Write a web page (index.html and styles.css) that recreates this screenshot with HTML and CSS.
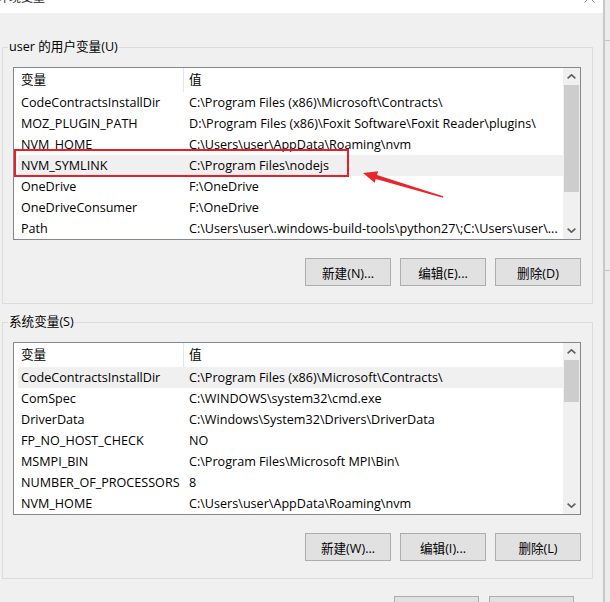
FILE: index.html
```html
<!DOCTYPE html>
<html lang="zh-CN">
<head>
<meta charset="utf-8">
<title>环境变量</title>
<link rel="stylesheet" href="styles.css">
</head>
<body>
<div class="screen">
  <div class="window">
    <div class="titlebar">
      <span class="title">环境变量</span>
      <svg class="close" width="11" height="11" viewBox="0 0 11 11"><path d="M0.5 0.5 L10.5 10.5 M10.5 0.5 L0.5 10.5" stroke="#8a8a8a" stroke-width="1" fill="none"/></svg>
    </div>
    <div class="body">
      <fieldset class="group">
        <legend>user 的用户变量(U)</legend>
        <div class="list">
          <div class="list-main">
            <div class="header"><div class="hcell c1">变量</div><div class="hcell c2">值</div></div>
            <div class="row"><span class="c1">CodeContractsInstallDir</span><span class="c2">C:\Program Files (x86)\Microsoft\Contracts\</span></div>
            <div class="row"><span class="c1">MOZ_PLUGIN_PATH</span><span class="c2">D:\Program Files (x86)\Foxit Software\Foxit Reader\plugins\</span></div>
            <div class="row"><span class="c1">NVM_HOME</span><span class="c2">C:\Users\user\AppData\Roaming\nvm</span></div>
            <div class="row sel"><span class="c1">NVM_SYMLINK</span><span class="c2">C:\Program Files\nodejs</span></div>
            <div class="row"><span class="c1">OneDrive</span><span class="c2">F:\OneDrive</span></div>
            <div class="row"><span class="c1">OneDriveConsumer</span><span class="c2">F:\OneDrive</span></div>
            <div class="row"><span class="c1">Path</span><span class="c2">C:\Users\user\.windows-build-tools\python27\;C:\Users\user\...</span></div>
          </div>
          <div class="scrollbar">
            <div class="sb-btn"><svg width="9" height="5" viewBox="0 0 9 5"><path d="M0.6 4.4 L4.5 0.8 L8.4 4.4" stroke="#606060" stroke-width="1.6" fill="none"/></svg></div>
            <div class="sb-track"><div class="thumb" style="height:107px"></div></div>
            <div class="sb-btn"><svg width="9" height="5" viewBox="0 0 9 5"><path d="M0.6 0.6 L4.5 4.2 L8.4 0.6" stroke="#606060" stroke-width="1.6" fill="none"/></svg></div>
          </div>
        </div>
        <div class="buttons">
          <button class="btn">新建(N)...</button>
          <button class="btn">编辑(E)...</button>
          <button class="btn">删除(D)</button>
        </div>
      </fieldset>

      <fieldset class="group group-sys">
        <legend>系统变量(S)</legend>
        <div class="list">
          <div class="list-main">
            <div class="header"><div class="hcell c1">变量</div><div class="hcell c2">值</div></div>
            <div class="row sel"><span class="c1">CodeContractsInstallDir</span><span class="c2">C:\Program Files (x86)\Microsoft\Contracts\</span></div>
            <div class="row"><span class="c1">ComSpec</span><span class="c2">C:\WINDOWS\system32\cmd.exe</span></div>
            <div class="row"><span class="c1">DriverData</span><span class="c2">C:\Windows\System32\Drivers\DriverData</span></div>
            <div class="row"><span class="c1">FP_NO_HOST_CHECK</span><span class="c2">NO</span></div>
            <div class="row"><span class="c1">MSMPI_BIN</span><span class="c2">C:\Program Files\Microsoft MPI\Bin\</span></div>
            <div class="row"><span class="c1">NUMBER_OF_PROCESSORS</span><span class="c2">8</span></div>
            <div class="row"><span class="c1">NVM_HOME</span><span class="c2">C:\Users\user\AppData\Roaming\nvm</span></div>
          </div>
          <div class="scrollbar">
            <div class="sb-btn"><svg width="9" height="5" viewBox="0 0 9 5"><path d="M0.6 4.4 L4.5 0.8 L8.4 4.4" stroke="#606060" stroke-width="1.6" fill="none"/></svg></div>
            <div class="sb-track"><div class="thumb" style="height:42px"></div></div>
            <div class="sb-btn"><svg width="9" height="5" viewBox="0 0 9 5"><path d="M0.6 0.6 L4.5 4.2 L8.4 0.6" stroke="#606060" stroke-width="1.6" fill="none"/></svg></div>
          </div>
        </div>
        <div class="buttons">
          <button class="btn">新建(W)...</button>
          <button class="btn">编辑(I)...</button>
          <button class="btn">删除(L)</button>
        </div>
      </fieldset>

      <div class="dialog-buttons">
        <button class="btn dbtn">确定</button>
        <button class="btn dbtn">取消</button>
      </div>
    </div>
  </div>
  <div class="edge">
    <div class="edge-line first"></div>
    <div class="edge-line second"></div>
  </div>
</div>

<svg class="annot" width="610" height="602" viewBox="0 0 610 602">
  <rect x="15" y="150" width="333" height="26" fill="none" stroke="#e5202a" stroke-width="2"/>
  <polygon points="363,173 378.1,171.3 377,175.1 443.2,196.3 442.8,197.7 375.8,178.9 374.7,182.7" fill="#e8262b"/>
</svg>
</body>
</html>
```

FILE: styles.css
```css
html, body {
  margin: 0;
  height: 602px;
  overflow: hidden;
}

body {
  position: relative;
  font-family: "Open Sans", "Noto Sans CJK SC", sans-serif;
  font-size: 12.6px;
  color: #000;
  background: #f0f0f0;
}

.screen {
  display: flex;
  height: 602px;
}

.window {
  width: 603px;
  flex: none;
  background: #f0f0f0;
}

.titlebar {
  height: 13px;
  background: #fff;
  display: flex;
  justify-content: space-between;
  align-items: flex-start;
  overflow: hidden;
}

.title {
  font-size: 12px;
  line-height: 12px;
  margin-top: -8px;
  margin-left: -3px;
  color: #222;
}

.close {
  margin-top: -8px;
  margin-right: 8px;
}

.body {
  padding: 26px 0 0 2px;
}

.group {
  margin: 0;
  width: 591px;
  min-width: 0;
  box-sizing: border-box;
  border: 1px solid #dcdcdc;
  padding: 12px 11px 17px 10px;
}

.group-sys {
  margin-top: 10px;
}

.group legend {
  padding: 0 1px;
  margin-left: -5px;
  line-height: 16px;
}

.list {
  display: flex;
  height: 173px;
  box-sizing: border-box;
  border: 1px solid #828790;
  background: #fff;
}

.list-main {
  flex: 1;
  min-width: 0;
}

.header {
  display: flex;
  height: 24px;
  line-height: 24px;
}

.hcell.c1 {
  width: 170px;
  box-sizing: border-box;
  padding-left: 7px;
  border-right: 1px solid #e5e5e5;
}

.hcell.c2 {
  padding-left: 5px;
}

.row {
  display: flex;
  height: 21px;
  line-height: 21px;
  margin-left: 4px;
  white-space: nowrap;
}

.row.sel {
  background: #f0f0f0;
}

.row .c1 {
  width: 168px;
  flex: none;
  box-sizing: border-box;
  padding-left: 3px;
  overflow: hidden;
}

.row .c2 {
  flex: 1;
  min-width: 0;
  padding-left: 3px;
  overflow: hidden;
}

.scrollbar {
  width: 17px;
  flex: none;
  background: #f0f0f0;
  display: flex;
  flex-direction: column;
}

.sb-btn {
  height: 17px;
  flex: none;
  display: flex;
  align-items: center;
  justify-content: center;
}

.sb-track {
  flex: 1;
}

.thumb {
  background: #cdcdcd;
  margin: 0 1px;
}

.buttons {
  display: flex;
  justify-content: flex-end;
  gap: 9px;
  margin-top: 18px;
}

.btn {
  width: 86px;
  height: 28px;
  box-sizing: border-box;
  border: 1px solid #adadad;
  background: #e1e1e1;
  font: inherit;
  color: #000;
  padding: 0;
  margin: 0;
}

.dialog-buttons {
  display: flex;
  justify-content: flex-end;
  gap: 10px;
  margin-top: 17px;
  padding-right: 29px;
}

.dbtn {
  width: 85px;
}

.edge {
  flex: 1;
  border-left: 2px solid #c8c8c8;
  background: #ececec;
}

.edge-line {
  height: 1px;
  background: #c4c4c4;
}

.edge-line.first {
  margin-top: 40px;
}

.edge-line.second {
  margin-top: 229px;
}

.annot {
  position: absolute;
  left: 0;
  top: 0;
  pointer-events: none;
}
```
